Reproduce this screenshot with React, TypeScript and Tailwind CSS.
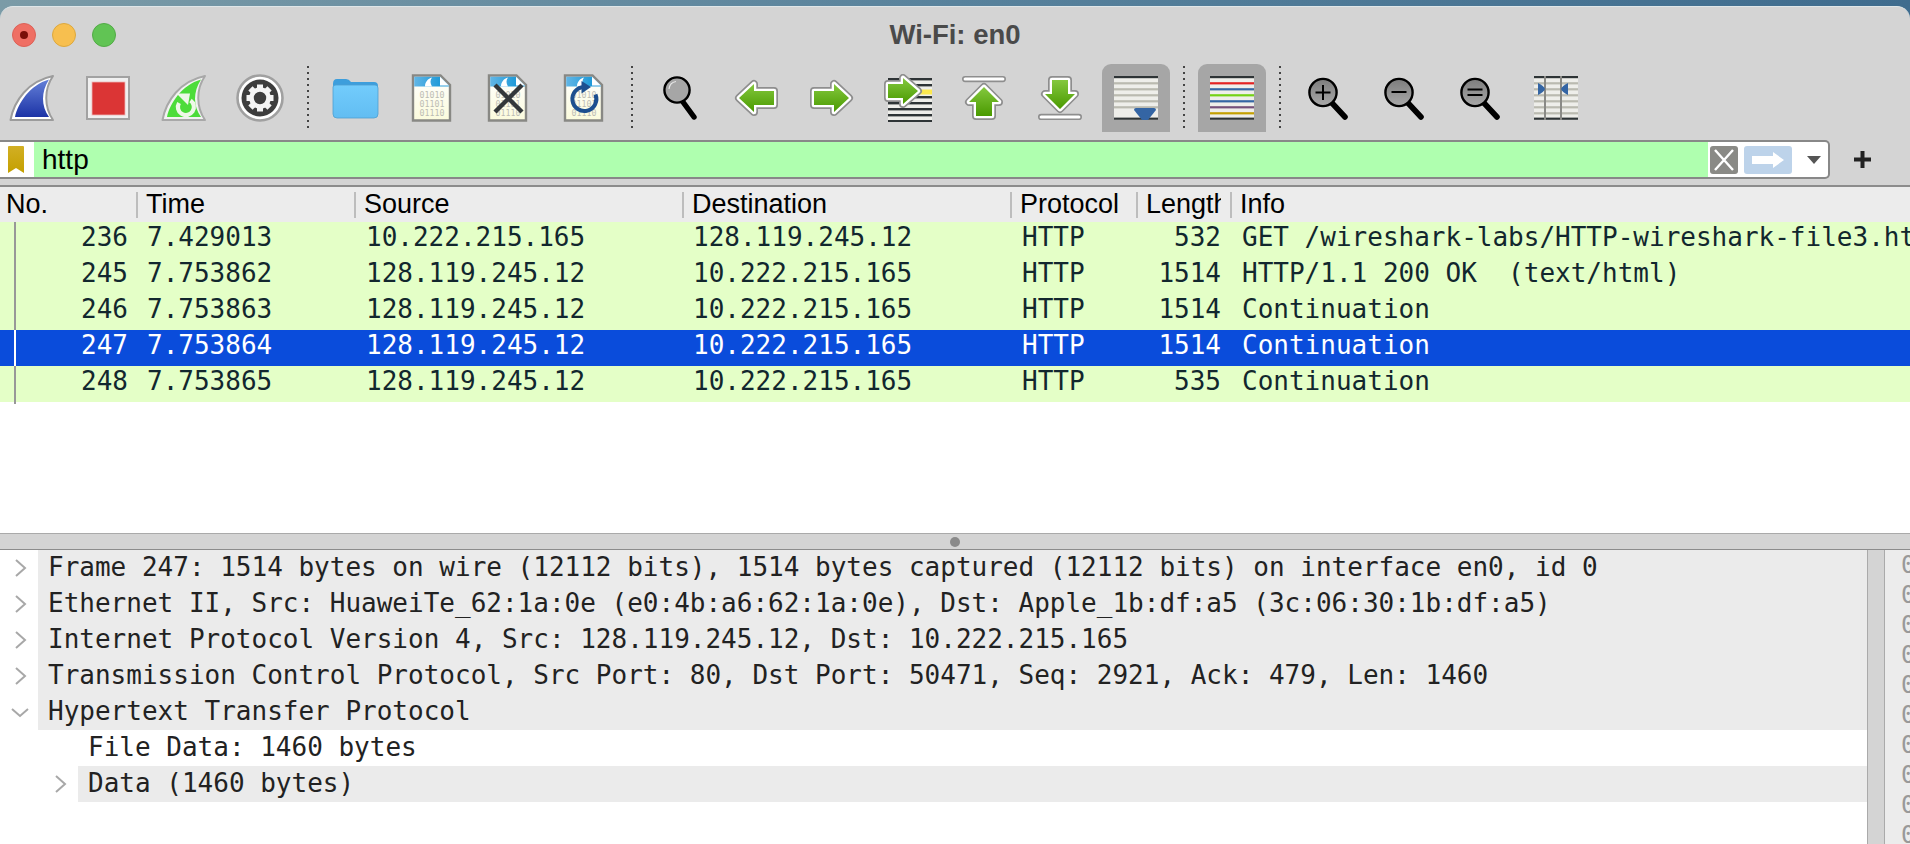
import { ReactNode } from "react";

const MONO = "font-['DejaVu_Sans_Mono',monospace]";
const SANS = "font-['Liberation_Sans',sans-serif]";

// shared svg gradients, one hidden svg holds them for every icon
function Defs() {
  return (
    <svg width="0" height="0" className="block h-0 w-0">
      <defs>
        <linearGradient id="blueFin" x1="0" y1="0" x2="0" y2="1">
          <stop offset="0" stopColor="#6480d8" />
          <stop offset="1" stopColor="#1c33a6" />
        </linearGradient>
        <linearGradient id="greenArrow" x1="0" y1="0" x2="0" y2="1">
          <stop offset="0" stopColor="#84c83e" />
          <stop offset="1" stopColor="#4a9a00" />
        </linearGradient>
        <linearGradient id="fileTop" x1="0" y1="0" x2="1" y2="0">
          <stop offset="0" stopColor="#62b6e6" />
          <stop offset="1" stopColor="#1f9ad8" />
        </linearGradient>
        <linearGradient id="fileBody" x1="0" y1="0" x2="0" y2="1">
          <stop offset="0" stopColor="#ffffff" />
          <stop offset="1" stopColor="#fbfbdc" />
        </linearGradient>
        <linearGradient id="folderBody" x1="0" y1="0" x2="0" y2="1">
          <stop offset="0" stopColor="#72ccfc" />
          <stop offset="1" stopColor="#62bdf2" />
        </linearGradient>
        <linearGradient id="lens" x1="0" y1="0" x2="0" y2="1">
          <stop offset="0" stopColor="#7d7d7d" />
          <stop offset="1" stopColor="#a8a8a8" />
        </linearGradient>
        <linearGradient id="bookmark" x1="0" y1="0" x2="0" y2="1">
          <stop offset="0" stopColor="#d2af24" />
          <stop offset="1" stopColor="#c4a000" />
        </linearGradient>
      </defs>
    </svg>
  );
}

function Icon({ children }: { children: ReactNode }) {
  return (
    <svg width="48" height="48" viewBox="0 0 48 48" className="block">
      {children}
    </svg>
  );
}

const FIN_OUT = "M2.5 46 C6 27 20 7 45 2 C36 15 36 33 45 46 Z";
const FIN_IN = "M7 43 C10 29 22 11 41 5.5 C33 18 33 32 41 43 Z";

function SharkIcon() {
  return (
    <Icon>
      <path d={FIN_OUT} fill="#fff" stroke="#9c9c9c" strokeWidth="2" strokeLinejoin="round" />
      <path d={FIN_IN} fill="url(#blueFin)" />
    </Icon>
  );
}

function StopIcon() {
  return (
    <Icon>
      <rect x="3" y="3" width="42" height="42" fill="#f0f0f0" stroke="#a2a2a2" strokeWidth="2" />
      <rect x="8" y="8" width="33" height="33" fill="#db3535" stroke="#eeb4b4" strokeWidth="0.8" />
    </Icon>
  );
}

function RestartIcon() {
  return (
    <Icon>
      <path d={FIN_OUT} fill="#f2f2f2" stroke="#a8a8a8" strokeWidth="2" strokeLinejoin="round" />
      <path d={FIN_IN} fill="#4cdc3a" />
      <path d="M30.5 26.5 A8 8 0 1 1 19 29" fill="none" stroke="#eef8e8" strokeWidth="4.2" />
      <path d="M16.5 19.5 L30 19.5 L28 31 Z" fill="#eef8e8" />
    </Icon>
  );
}

function GearIcon() {
  const teeth = [0, 45, 90, 135, 180, 225, 270, 315];
  return (
    <Icon>
      <circle cx="24" cy="24" r="22.5" fill="#fff" stroke="#a0a0a0" strokeWidth="2.6" />
      <circle cx="24" cy="24" r="18.5" fill="#3d3d3d" />
      {teeth.map((a) => (
        <rect key={a} x="21" y="10.5" width="6" height="6" fill="#f4f4f4" transform={`rotate(${a} 24 24)`} />
      ))}
      <circle cx="24" cy="24" r="8.5" fill="none" stroke="#f4f4f4" strokeWidth="4.6" />
    </Icon>
  );
}

function FolderIcon() {
  return (
    <Icon>
      <path d="M1 10 Q1 5 5 5 H14 Q17 5 19 8 H42 Q46 8 46 12 V20 H1 Z" fill="#3d9edc" />
      <path d="M1 13 Q1 11 4 11 H43 Q46 11 46 14 V40 Q46 44 42 44 H5 Q1 44 1 40 Z" fill="url(#folderBody)" stroke="#4e9fd0" strokeWidth="0.8" />
    </Icon>
  );
}

function FileBase() {
  return (
    <>
      <path d="M5 1.5 H32.5 L42 11 V46.5 H5 Z" fill="url(#fileBody)" stroke="#888884" strokeWidth="2.4" />
      <path d="M6.2 2.7 H32 V12.5 H6.2 Z" fill="url(#fileTop)" />
      <path d="M32 2.7 L40.8 11.5 V12.5 H32 Z" fill="#2f9fdc" />
      <path d="M32 2.7 V11.5 H40.8 Z" fill="#fff" />
      <path d="M17 12.5 C17 8 20 4.5 24 3.5 C22 6 22 9 24 12.5 Z" fill="#fff" />
      {["01010", "01101", "01110"].map((t, i) => (
        <text key={t} x="24" y={24 + i * 9} textAnchor="middle" fontSize="8.3" fill="#bcbcb4" fontFamily="DejaVu Sans Mono, monospace">
          {t}
        </text>
      ))}
    </>
  );
}

function FileIcon() {
  return (
    <Icon>
      <FileBase />
    </Icon>
  );
}

function FileCloseIcon() {
  return (
    <Icon>
      <FileBase />
      <path d="M11 11 L38 38 M38 11 L11 38" stroke="#33373a" strokeWidth="4.4" />
    </Icon>
  );
}

function FileReloadIcon() {
  return (
    <Icon>
      <FileBase />
      <path d="M24 13 A12 12 0 1 0 35.5 20.5" fill="none" stroke="#1d4f8f" strokeWidth="4" />
      <path d="M21.5 7 L31 13 L21.5 19.5 Z" fill="#1d4f8f" />
    </Icon>
  );
}

function FindIcon() {
  return (
    <Icon>
      <path d="M27 28 L38 43" stroke="#000" strokeWidth="5.4" strokeLinecap="round" />
      <circle cx="21" cy="16" r="12.6" fill="#a6a6a6" stroke="#000" strokeWidth="2.4" />
      <path d="M13 15 A8.5 8.5 0 0 1 20 7.5" fill="none" stroke="#e8e8e8" strokeWidth="1.2" />
    </Icon>
  );
}

// arrow drawn three times: grey halo, white edge, green fill
function ArrowShape({ d }: { d: string }) {
  return (
    <>
      <path d={d} fill="#8e8e8e" stroke="#8e8e8e" strokeWidth="8" strokeLinejoin="round" />
      <path d={d} fill="#fff" stroke="#fff" strokeWidth="4.6" strokeLinejoin="round" />
      <path d={d} fill="url(#greenArrow)" />
    </>
  );
}

function BackIcon() {
  return (
    <Icon>
      <ArrowShape d="M7 24 L22 10 V17 H42 V31 H22 V38 Z" />
    </Icon>
  );
}

function ForwardIcon() {
  return (
    <Icon>
      <ArrowShape d="M41 24 L26 10 V17 H6 V31 H26 V38 Z" />
    </Icon>
  );
}

function GoToIcon() {
  const ys = [5, 11, 23, 29, 35, 41, 47];
  return (
    <Icon>
      <rect x="4" y="4" width="44" height="44" fill="#eeeeea" />
      <rect x="4" y="15.5" width="44" height="5" fill="#fce94f" />
      {ys.map((y) => (
        <rect key={y} x="4" y={y - 1} width="44" height="2.4" fill="#2e3436" />
      ))}
      <ArrowShape d="M34 17 L19 4 V10 H4 V24 H19 V30 Z" />
    </Icon>
  );
}

function FirstIcon() {
  return (
    <Icon>
      <rect x="2.8" y="2.8" width="42.4" height="4.6" rx="2.3" fill="#fff" stroke="#8e8e8e" strokeWidth="1.6" />
      <ArrowShape d="M24 13 L9 28 H16 V42 H32 V28 H39 Z" />
    </Icon>
  );
}

function LastIcon() {
  return (
    <Icon>
      <rect x="2.8" y="40.6" width="42.4" height="4.6" rx="2.3" fill="#fff" stroke="#8e8e8e" strokeWidth="1.6" />
      <ArrowShape d="M24 35 L9 20 H16 V6 H32 V20 H39 Z" />
    </Icon>
  );
}

function ListLines({ colors }: { colors: string[] }) {
  return (
    <>
      <rect x="2" y="2" width="44" height="44" fill="#eeeeea" />
      <rect x="2" y="2" width="44" height="2.2" fill="#2e3436" />
      <rect x="2" y="43.6" width="44" height="2.2" fill="#2e3436" />
      {colors.map((c, i) => (
        <rect key={i} x="2" y={8.2 + i * 6} width="44" height="2.2" fill={c} />
      ))}
    </>
  );
}

function AutoScrollIcon() {
  return (
    <Icon>
      <ListLines colors={["#babab0", "#babab0", "#babab0", "#babab0", "#babab0", "#eeeeea"]} />
      <path d="M22 36 Q22 34 24 34 H42 Q44 34 44 36 L36 46 H30 Z" fill="#3465a4" />
    </Icon>
  );
}

function ColorizeIcon() {
  return (
    <Icon>
      <ListLines colors={["#e32222", "#3465a4", "#73d216", "#3465a4", "#75507b", "#c4a000"]} />
    </Icon>
  );
}

function ZoomIcon({ sign }: { sign: "in" | "out" | "reset" }) {
  return (
    <Icon>
      <path d="M28 29 L41 43" stroke="#000" strokeWidth="5.6" strokeLinecap="round" />
      <circle cx="19" cy="18.5" r="13.6" fill="url(#lens)" stroke="#000" strokeWidth="2.4" />
      {sign === "in" && <path d="M19 11 V26 M11.5 18.5 H26.5" stroke="#000" strokeWidth="2" />}
      {sign === "out" && <path d="M11.5 18 H26.5" stroke="#000" strokeWidth="2" />}
      {sign === "reset" && <path d="M11.5 15.5 H26.5 M11.5 21 H26.5" stroke="#000" strokeWidth="2" />}
    </Icon>
  );
}

function ResizeIcon() {
  return (
    <Icon>
      <ListLines colors={["#babab0", "#babab0", "#babab0", "#babab0", "#babab0", "#babab0"]} />
      <rect x="12" y="2" width="2" height="44" fill="#8a8a86" />
      <rect x="28" y="2" width="2" height="44" fill="#8a8a86" />
      <path d="M6 9 Q12 12 13 15 Q12 18 6 21 Z" fill="#3465a4" />
      <path d="M36 9 Q30 12 29 15 Q30 18 36 21 Z" fill="#3465a4" />
    </Icon>
  );
}

function ToolButton({ active = false, children }: { active?: boolean; children: ReactNode }) {
  return (
    <div className={`flex h-[68px] w-[68px] items-center justify-center ${active ? "rounded-t-[9px] bg-[#a6a6a6]" : ""}`}>
      {children}
    </div>
  );
}

function Divider() {
  return (
    <div className="flex h-[68px] w-3 justify-center pt-[2px]">
      <div className="h-[62px] w-[2px] bg-[repeating-linear-gradient(to_bottom,#444_0,#444_2px,transparent_2px,transparent_6px)]" />
    </div>
  );
}

function Toolbar() {
  return (
    <div className="-ml-[2px] flex h-[76px] gap-2">
      <ToolButton><SharkIcon /></ToolButton>
      <ToolButton><StopIcon /></ToolButton>
      <ToolButton><RestartIcon /></ToolButton>
      <ToolButton><GearIcon /></ToolButton>
      <Divider />
      <ToolButton><FolderIcon /></ToolButton>
      <ToolButton><FileIcon /></ToolButton>
      <ToolButton><FileCloseIcon /></ToolButton>
      <ToolButton><FileReloadIcon /></ToolButton>
      <Divider />
      <ToolButton><FindIcon /></ToolButton>
      <ToolButton><BackIcon /></ToolButton>
      <ToolButton><ForwardIcon /></ToolButton>
      <ToolButton><GoToIcon /></ToolButton>
      <ToolButton><FirstIcon /></ToolButton>
      <ToolButton><LastIcon /></ToolButton>
      <ToolButton active><AutoScrollIcon /></ToolButton>
      <Divider />
      <ToolButton active><ColorizeIcon /></ToolButton>
      <Divider />
      <ToolButton><ZoomIcon sign="in" /></ToolButton>
      <ToolButton><ZoomIcon sign="out" /></ToolButton>
      <ToolButton><ZoomIcon sign="reset" /></ToolButton>
      <ToolButton><ResizeIcon /></ToolButton>
    </div>
  );
}

function FilterBar() {
  return (
    <div className="flex h-[39px] items-stretch">
      <div className="flex w-[1830px] overflow-hidden rounded-r-[5px] border-y-2 border-r-2 border-[#888] bg-white">
        <div className="flex w-[34px] items-center justify-center bg-white pr-[2px]">
          <svg width="16" height="28" viewBox="0 0 16 28" className="block">
            <path d="M1 0 H15 Q16 0 16 1 V27 L8 22 L0 27 V1 Q0 0 1 0 Z" fill="url(#bookmark)" />
          </svg>
        </div>
        <div className={`flex-1 bg-[#afffaf] pl-2 text-[28px] leading-[35px] text-black ${SANS}`}>http</div>
        <div className="flex w-[120px] items-center pl-[2px]">
          <div className="flex h-7 w-7 items-center justify-center rounded-[3px] bg-[#8a8a86]">
            <svg width="22" height="24" viewBox="0 0 22 24">
              <path d="M2 2 L20 22 M20 2 L2 22" stroke="#fff" strokeWidth="2.4" />
            </svg>
          </div>
          <div className="ml-[6px] flex h-7 w-12 items-center justify-center rounded-[3px] bg-[#bdd3ea]">
            <svg width="34" height="18" viewBox="0 0 34 18">
              <path d="M1 5 H22 V1 L33 9 L22 17 V13 H1 Z" fill="#fff" />
            </svg>
          </div>
          <svg width="14" height="8" viewBox="0 0 14 8" className="ml-[15px]">
            <path d="M0 0 H14 L7 8 Z" fill="#555" />
          </svg>
        </div>
      </div>
      <div className="flex w-[64px] items-center justify-center">
        <svg width="17" height="17" viewBox="0 0 17 17">
          <path d="M6.5 0 H10.5 V6.5 H17 V10.5 H10.5 V17 H6.5 V10.5 H0 V6.5 H6.5 Z" fill="#222" />
        </svg>
      </div>
    </div>
  );
}

type Packet = { no: string; time: string; src: string; dst: string; len: string; info: string; selected?: boolean };

const PACKETS: Packet[] = [
  { no: "236", time: "7.429013", src: "10.222.215.165", dst: "128.119.245.12", len: "532", info: "GET /wireshark-labs/HTTP-wireshark-file3.html HTTP/1.1" },
  { no: "245", time: "7.753862", src: "128.119.245.12", dst: "10.222.215.165", len: "1514", info: "HTTP/1.1 200 OK  (text/html)" },
  { no: "246", time: "7.753863", src: "128.119.245.12", dst: "10.222.215.165", len: "1514", info: "Continuation" },
  { no: "247", time: "7.753864", src: "128.119.245.12", dst: "10.222.215.165", len: "1514", info: "Continuation", selected: true },
  { no: "248", time: "7.753865", src: "128.119.245.12", dst: "10.222.215.165", len: "535", info: "Continuation" },
];

function HeaderCell({ label, width, first = false }: { label: string; width: string; first?: boolean }) {
  return (
    <div className={`flex h-full shrink-0 items-center overflow-hidden ${width}`}>
      {!first && <div className="h-[26px] w-[2px] shrink-0 bg-[#bdbdbd]" />}
      <span className={`whitespace-nowrap ${first ? "pl-[6px]" : "pl-[8px]"}`}>{label}</span>
    </div>
  );
}

function PacketHeader() {
  return (
    <div className={`flex h-[35px] shrink-0 bg-[#ececec] text-[27px] text-black ${SANS}`}>
      <HeaderCell first label="No." width="w-[136px]" />
      <HeaderCell label="Time" width="w-[218px]" />
      <HeaderCell label="Source" width="w-[328px]" />
      <HeaderCell label="Destination" width="w-[328px]" />
      <HeaderCell label="Protocol" width="w-[126px]" />
      <HeaderCell label="Length" width="w-[85px] mr-[9px]" />
      <HeaderCell label="Info" width="flex-1" />
    </div>
  );
}

function PacketRow({ p }: { p: Packet }) {
  return (
    <div className={`flex h-[36px] whitespace-pre text-[26px] leading-[31px] ${MONO} ${p.selected ? "bg-[#0a4cdb] text-white" : "bg-[#e4ffc7] text-[#12272e]"}`}>
      <div className={`ml-[14px] h-full w-[123px] shrink-0 border-l-2 pr-[9px] text-right ${p.selected ? "border-white" : "border-[#989898]"}`}>{p.no}</div>
      <div className="w-[218px] shrink-0 pl-[10px]">{p.time}</div>
      <div className="w-[328px] shrink-0 pl-[11px]">{p.src}</div>
      <div className="w-[328px] shrink-0 pl-[10px]">{p.dst}</div>
      <div className="w-[126px] shrink-0 pl-[11px]">HTTP</div>
      <div className="w-[94px] shrink-0 pr-[10px] text-right">{p.len}</div>
      <div className="min-w-0 flex-1 overflow-hidden pl-[11px]">{p.info}</div>
    </div>
  );
}

function Chevron({ open = false }: { open?: boolean }) {
  return (
    <svg width="18" height="20" viewBox="0 0 18 20" className="block">
      <path d={open ? "M1 7 L9 14 L17 7" : "M5 2 L14 10 L5 18"} fill="none" stroke="#a8a8a8" strokeWidth="2" />
    </svg>
  );
}

type Detail = { text: string; depth: 0 | 1; chevron?: "right" | "down"; shaded?: boolean };

const DETAILS: Detail[] = [
  { text: "Frame 247: 1514 bytes on wire (12112 bits), 1514 bytes captured (12112 bits) on interface en0, id 0", depth: 0, chevron: "right", shaded: true },
  { text: "Ethernet II, Src: HuaweiTe_62:1a:0e (e0:4b:a6:62:1a:0e), Dst: Apple_1b:df:a5 (3c:06:30:1b:df:a5)", depth: 0, chevron: "right", shaded: true },
  { text: "Internet Protocol Version 4, Src: 128.119.245.12, Dst: 10.222.215.165", depth: 0, chevron: "right", shaded: true },
  { text: "Transmission Control Protocol, Src Port: 80, Dst Port: 50471, Seq: 2921, Ack: 479, Len: 1460", depth: 0, chevron: "right", shaded: true },
  { text: "Hypertext Transfer Protocol", depth: 0, chevron: "down", shaded: true },
  { text: "File Data: 1460 bytes", depth: 1 },
  { text: "Data (1460 bytes)", depth: 1, chevron: "right", shaded: true },
];

function DetailRow({ row }: { row: Detail }) {
  return (
    <div className="flex h-[36px]">
      <div className={`flex shrink-0 items-center justify-end pr-[9px] ${row.depth === 0 ? "w-[38px]" : "w-[78px]"}`}>
        {row.chevron && <Chevron open={row.chevron === "down"} />}
      </div>
      <div className={`flex-1 overflow-hidden whitespace-nowrap pl-[10px] text-[26px] leading-[35px] text-[#222] ${MONO} ${row.shaded ? "bg-[#ebebeb]" : ""}`}>
        {row.text}
      </div>
    </div>
  );
}

const HEX_ROWS = ["0000", "0010", "0020", "0030", "0040", "0050", "0060", "0070", "0080", "0090"];

export default function App() {
  return (
    <div className="h-[844px] w-[1910px] overflow-hidden bg-gradient-to-r from-[#7b9ba7] via-[#58829c] to-[#3f6c8e] pt-[6px]">
      <Defs />
      <div className="flex h-[838px] flex-col overflow-hidden rounded-t-[13px] border-t border-[#dfe6e8] bg-[#d4d4d4]">
        <div className="flex h-[57px] shrink-0 items-center">
          <div className="flex w-[130px] items-center gap-4 pb-[2px] pl-3">
            <div className="flex h-6 w-6 items-center justify-center rounded-full border border-[#dc6157] bg-[#ef6f64]">
              <div className="h-2 w-2 rounded-full bg-[#7a0f08]" />
            </div>
            <div className="h-6 w-6 rounded-full border border-[#dca83e] bg-[#f7bf4f]" />
            <div className="h-6 w-6 rounded-full border border-[#52ab46] bg-[#61c454]" />
          </div>
          <div className={`w-[1650px] pb-[2px] text-center text-[27.5px] font-bold text-[#4a4a4a] ${SANS}`}>Wi-Fi: en0</div>
        </div>
        <Toolbar />
        <FilterBar />
        <div className="h-[6px] shrink-0" />
        <div className="h-[2px] shrink-0 bg-[#8c8c8c]" />
        <PacketHeader />
        <div className="h-[311px] shrink-0 bg-white">
          {PACKETS.map((p) => (
            <PacketRow key={p.no} p={p} />
          ))}
          <div className="ml-[14px] h-[2px] w-[2px] bg-[#989898]" />
        </div>
        <div className="flex h-[17px] shrink-0 items-center justify-center border-y border-t-[#aaa] border-b-[#8c8c8c]">
          <div className="h-[10px] w-[10px] rounded-full bg-[#8a8a8a]" />
        </div>
        <div className="flex min-h-0 flex-1">
          <div className="w-[1868px] shrink-0 border-r border-[#aaa] bg-white">
            {DETAILS.map((r) => (
              <DetailRow key={r.text} row={r} />
            ))}
          </div>
          <div className="w-[16px] shrink-0" />
          <div className={`flex-1 overflow-hidden border-l border-[#aaa] bg-[#ececec] pl-[16px] text-[24px] leading-[30px] text-[#999] ${MONO}`}>
            {HEX_ROWS.map((h) => (
              <div key={h} className="h-[30px]">{h}</div>
            ))}
          </div>
        </div>
      </div>
    </div>
  );
}
